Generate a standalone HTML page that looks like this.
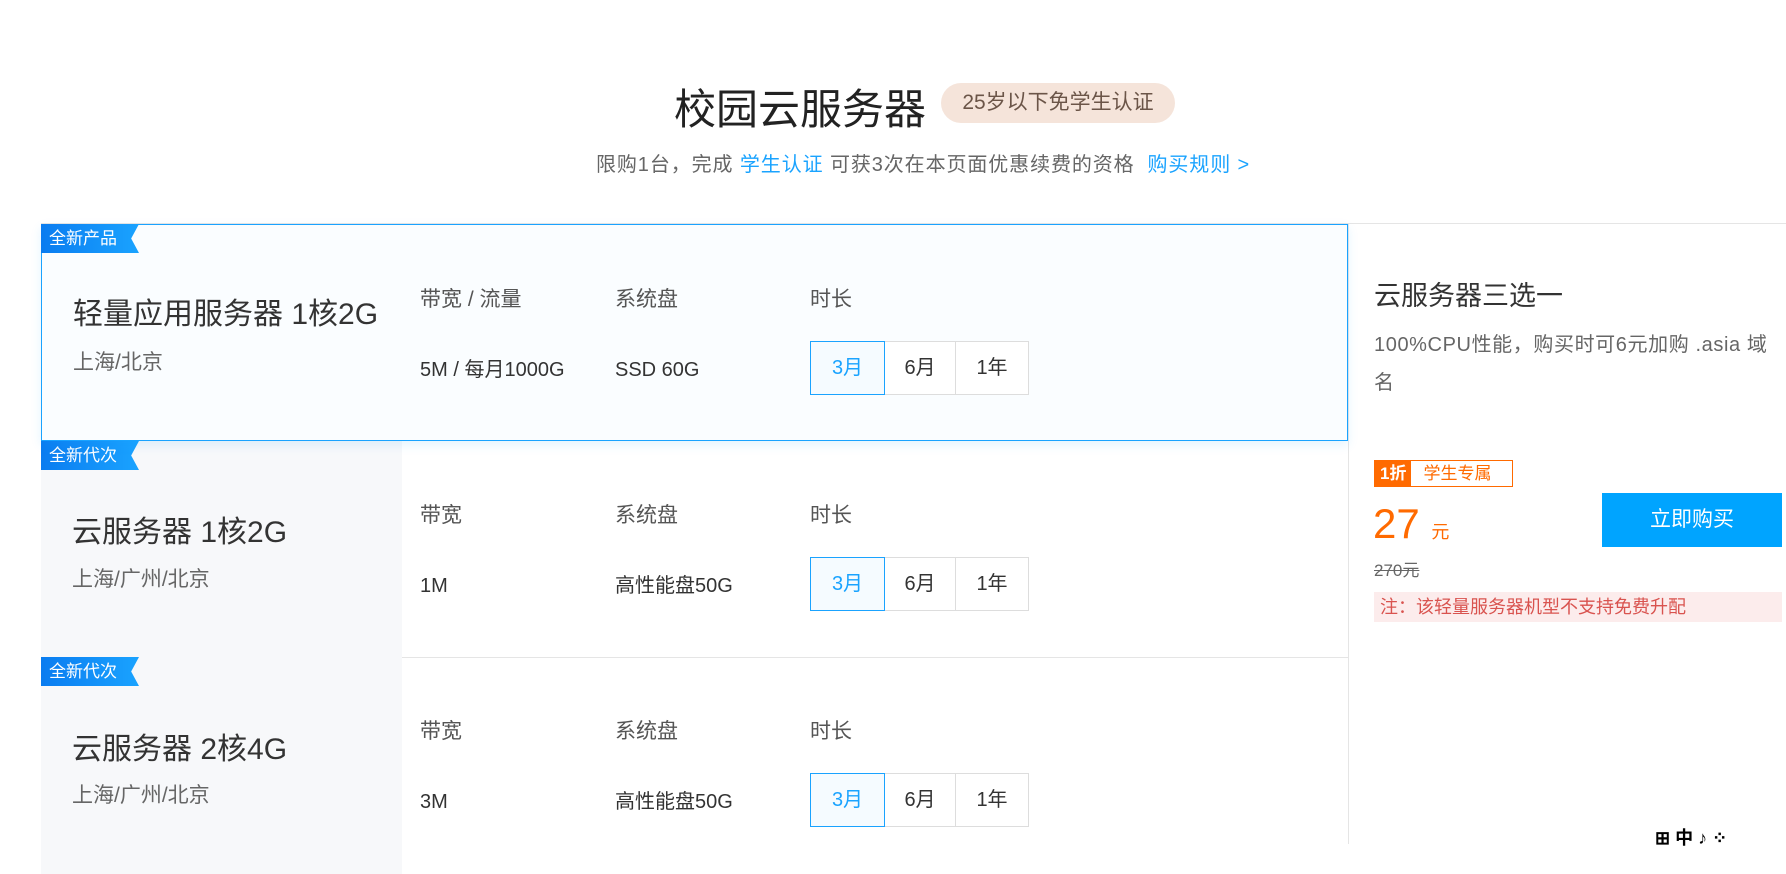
<!DOCTYPE html>
<html><head><meta charset="utf-8"><style>
*{margin:0;padding:0;box-sizing:border-box}
body{width:1786px;height:844px;overflow:hidden;background:#fff;font-family:"Liberation Sans","Noto Sans CJK SC",sans-serif;color:#333;position:relative}
.a{position:absolute;white-space:nowrap}
.card{position:absolute;left:41px;width:1307px;border-bottom:1px solid #e5e5e5}
.tag{position:absolute;left:0;top:0;height:29px;width:98px;background:linear-gradient(90deg,#0a7cf0,#1aa3ff);color:#fff;font-size:17px;line-height:29px;padding-left:8px;clip-path:polygon(0 0,100% 0,92% 50%,100% 100%,0 100%)}
.left{position:absolute;left:0;top:0;bottom:0;width:361px;background:#f7f8fa}
.nm{position:absolute;left:31px;font-size:30px;color:#333}
.loc{position:absolute;left:31px;font-size:21px;color:#666}
.h{position:absolute;font-size:21px;color:#555}
.v{position:absolute;font-size:20px;color:#333;line-height:24px}
.btn{position:absolute;height:54px;border:1px solid #ddd;background:#fff;font-size:20px;line-height:52px;text-align:center;color:#333}
.sel{border-color:#1aa3ff;color:#1aa3ff;background:#f5fbff;z-index:2}
</style></head><body>
<div class="a" style="left:674px;top:76px;font-size:42px;color:#222">校园云服务器</div>
<div class="a" style="left:941px;top:83px;width:234px;height:40px;border-radius:20px;background:#f5e4da;color:#6b5548;font-size:21px;line-height:40px;text-align:center">25岁以下免学生认证</div>
<div class="a" style="left:596px;top:148px;font-size:20px;color:#666;letter-spacing:0.9px">限购1台，完成 <span style="color:#1aa3ff">学生认证</span> 可获3次在本页面优惠续费的资格 &nbsp;<span style="color:#1aa3ff">购买规则 &gt;</span></div>
<div class="a" style="left:41px;top:223px;width:1745px;height:1px;background:#e5e5e5"></div>
<div class="a" style="left:1348px;top:223px;width:1px;height:621px;background:#e5e5e5"></div>
<div class="a" style="left:41px;top:223px;width:1px;height:621px;background:#e5e5e5"></div>

<div class="card" style="top:224px;height:217px;background:#fafdff;border:1px solid #1aa3ff;z-index:3;box-shadow:0 4px 10px rgba(26,163,255,.12)">
<div class="tag" style="left:-1px;top:-1px">全新产品</div>
<div class="nm" style="top:64px">轻量应用服务器 1核2G</div>
<div class="loc" style="top:121px">上海/北京</div>
<div class="h" style="left:378px;top:58px">带宽 / 流量</div>
<div class="h" style="left:573px;top:58px">系统盘</div>
<div class="h" style="left:768px;top:58px">时长</div>
<div class="v" style="left:378px;top:133px">5M / 每月1000G</div>
<div class="v" style="left:573px;top:133px">SSD 60G</div>
<div class="btn sel" style="left:768px;top:116px;width:75px">3月</div>
<div class="btn" style="left:842px;top:116px;width:72px">6月</div>
<div class="btn" style="left:913px;top:116px;width:74px">1年</div>
</div>

<div class="card" style="top:441px;height:217px">
<div class="left"></div><div class="tag">全新代次</div>
<div class="nm" style="top:66px">云服务器 1核2G</div>
<div class="loc" style="top:122px">上海/广州/北京</div>
<div class="h" style="left:379px;top:58px">带宽</div>
<div class="h" style="left:574px;top:58px">系统盘</div>
<div class="h" style="left:769px;top:58px">时长</div>
<div class="v" style="left:379px;top:133px">1M</div>
<div class="v" style="left:574px;top:133px">高性能盘50G</div>
<div class="btn sel" style="left:769px;top:116px;width:75px">3月</div>
<div class="btn" style="left:843px;top:116px;width:72px">6月</div>
<div class="btn" style="left:914px;top:116px;width:74px">1年</div>
</div>

<div class="card" style="top:657px;height:217px;border-bottom:none">
<div class="left"></div><div class="tag">全新代次</div>
<div class="nm" style="top:67px">云服务器 2核4G</div>
<div class="loc" style="top:122px">上海/广州/北京</div>
<div class="h" style="left:379px;top:58px">带宽</div>
<div class="h" style="left:574px;top:58px">系统盘</div>
<div class="h" style="left:769px;top:58px">时长</div>
<div class="v" style="left:379px;top:133px">3M</div>
<div class="v" style="left:574px;top:133px">高性能盘50G</div>
<div class="btn sel" style="left:769px;top:116px;width:75px">3月</div>
<div class="btn" style="left:843px;top:116px;width:72px">6月</div>
<div class="btn" style="left:914px;top:116px;width:74px">1年</div>
</div>

<div class="a" style="left:1374px;top:274px;font-size:27px;color:#333">云服务器三选一</div>
<div class="a" style="left:1374px;top:326px;width:402px;white-space:normal;font-size:20px;line-height:38px;color:#666;letter-spacing:0.6px">100%CPU性能，购买时可6元加购 .asia 域名</div>
<div class="a" style="left:1374px;top:460px;height:27px;width:139px;border:1px solid #ff6a00;font-size:17px;line-height:25px;color:#ff6a00"><span style="display:inline-block;background:#ff6a00;color:#fff;padding:0 5px;font-weight:bold">1折</span><span style="padding-left:12px">学生专属</span></div>
<div class="a" style="left:1373px;top:500px;font-size:42px;color:#ff6a00">27 <span style="font-size:18px">元</span></div>
<div class="a" style="left:1374px;top:556px;font-size:17px;color:#666;text-decoration:line-through">270元</div>
<div class="a" style="left:1602px;top:493px;width:180px;height:54px;background:#00a4ff;color:#fff;font-size:21px;line-height:54px;text-align:center">立即购买</div>
<div class="a" style="left:1374px;top:592px;width:408px;height:30px;background:#fcecec;color:#d9534f;font-size:18px;line-height:30px;padding-left:6px">注：该轻量服务器机型不支持免费升配</div>
<div class="a" style="left:1655px;top:824px;font-size:18px;color:#000;font-weight:bold">⊞ 中 ♪ ⁘</div>
</body></html>
